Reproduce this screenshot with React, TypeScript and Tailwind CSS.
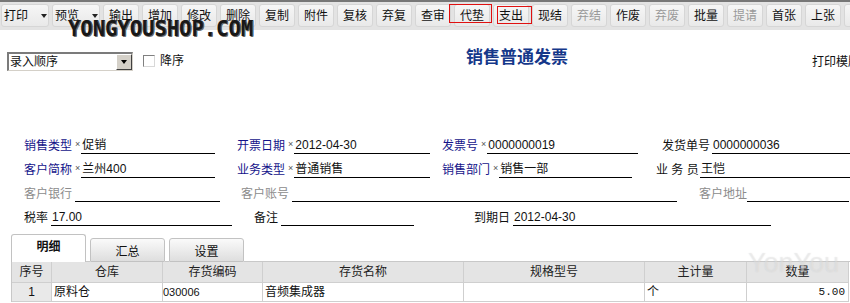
const tools = [
  { t: "打印", dd: true },
  { t: "预览", dd: true },
  { t: "输出" },
  { t: "增加" },
  { t: "修改" },
  { t: "删除" },
  { t: "复制" },
  { t: "附件" },
  { t: "复核" },
  { t: "弃复" },
  { t: "查审" },
  { t: "代垫", mark: "a" },
  { t: "支出", mark: "b" },
  { t: "现结" },
  { t: "弃结", off: true },
  { t: "作废" },
  { t: "弃废", off: true },
  { t: "批量" },
  { t: "提请", off: true },
  { t: "首张" },
  { t: "上张" },
  { t: "下张" },
];

const blue = "text-[#14148a]";
const gray = "text-[#8c8c8c]";

function Field({
  w,
  label,
  color,
  star,
  value,
  line,
}: {
  w: string;
  label: string;
  color: string;
  star?: boolean;
  value?: string;
  line: string;
}) {
  return (
    <div className={`flex items-center shrink-0 ${w}`}>
      <span className={`whitespace-nowrap ${color}`}>{label}</span>
      {star ? <span className="text-[9px] text-[#555] self-start mt-[3px] ml-[3px] mr-[1px] leading-none">×</span> : <span className="w-[3px]" />}
      <div className={`h-[16px] border-b border-black pl-[1px] leading-[15px] whitespace-nowrap shrink-0 ${line}`}>{value}</div>
    </div>
  );
}

const cols = ["序号", "仓库", "存货编码", "存货名称", "规格型号", "主计量", "数量"];

export default function App() {
  return (
    <div className="w-[850px] h-[303px] overflow-hidden bg-white relative text-[12px] text-[#111] font-['Liberation_Sans','Noto_Sans_CJK_SC',sans-serif]">
      {/* toolbar */}
      <div className="h-[30px] bg-[#e3e3e3] border-t-2 border-[#777] flex gap-[3px] pl-[1px] pt-[2px] overflow-hidden">
        {tools.map((b, i) => (
          <div
            key={i}
            className={`relative shrink-0 h-[23px] rounded-[3px] border border-[#d6d6d6] bg-gradient-to-b from-[#f6f6f6] to-[#e9e9e9] flex items-center ${b.dd ? "w-[48px] pl-[2px]" : "w-[36px] justify-center"} ${b.off ? "text-[#999]" : "text-[#111]"}`}
          >
            <span className="leading-none">{b.t}</span>
            {b.dd && <span className="ml-[13px] w-0 h-0 border-x-[3px] border-x-transparent border-t-[4px] border-t-[#222]" />}
            {b.mark === "a" && <span className="absolute -left-[6px] -top-[1px] w-[43px] h-[19px] border border-[#e01010]" />}
            {b.mark === "b" && <span className="absolute left-[3px] top-[1px] w-[35px] h-[18px] border border-[#e01010]" />}
          </div>
        ))}
      </div>
      <div className="absolute left-[68px] top-[19px] text-[20.5px] font-bold leading-none text-[#181818] font-['DejaVu_Sans_Mono',monospace] [text-shadow:1px_1px_0_#6a6a6a,1px_0_0_#333]">
        YONGYOUSHOP.COM
      </div>

      {/* order + title */}
      <div className="flex mt-[21px] h-[20px]">
        <div className="w-[466px] shrink-0 flex items-center pl-[7px]">
          <div className="w-[126px] h-[19px] flex border-t-2 border-l-2 border-[#7b7b7b] border-b border-r border-b-[#d4d0c8] border-r-[#d4d0c8] bg-white">
            <span className="flex-1 pl-[1px] leading-[16px]">录入顺序</span>
            <span className="w-[16px] h-[16px] bg-[#d4d0c8] border border-t-white border-l-white border-r-[#404040] border-b-[#404040] flex items-center justify-center">
              <span className="w-0 h-0 border-x-[3px] border-x-transparent border-t-[4px] border-t-black" />
            </span>
          </div>
          <span className="ml-[10px] w-[12px] h-[12px] border border-t-[#808080] border-l-[#808080] border-r-[#d8d8d8] border-b-[#d8d8d8] bg-white" />
          <span className="ml-[5px]">降序</span>
        </div>
        <div className="w-[346px] shrink-0 -mt-[3px] text-[17px] font-bold text-[#15388a] leading-[20px]">销售普通发票</div>
        <div className="whitespace-nowrap shrink-0 mt-[2px]">打印模版</div>
      </div>

      {/* header fields */}
      <div className="mt-[63px] pl-[24px]">
        <div className="flex items-center h-[24px]">
          <Field w="w-[213px]" label="销售类型" color={blue} star value="促销" line="w-[134px]" />
          <Field w="w-[205px]" label="开票日期" color={blue} star value="2012-04-30" line="w-[136px]" />
          <Field w="w-[220px]" label="发票号" color={blue} star value="0000000019" line="w-[151px]" />
          <Field w="w-[190px]" label="发货单号" color="text-[#111]" value="0000000036" line="w-[140px]" />
        </div>
        <div className="flex items-center h-[24px]">
          <Field w="w-[213px]" label="客户简称" color={blue} star value="兰州400" line="w-[134px]" />
          <Field w="w-[205px]" label="业务类型" color={blue} star value="普通销售" line="w-[136px]" />
          <Field w="w-[214px]" label="销售部门" color={blue} star value="销售一部" line="w-[133px]" />
          <Field w="w-[196px]" label="业 务 员" color="text-[#111]" value="王恺" line="w-[152px]" />
        </div>
        <div className="flex items-center h-[24px]">
          <Field w="w-[217px]" label="客户银行" color={gray} line="w-[145px]" />
          <Field w="w-[458px]" label="客户账号" color={gray} line="w-[385px]" />
          <Field w="w-[150px]" label="客户地址" color={gray} line="w-[102px]" />
        </div>
        <div className="flex items-center h-[24px]">
          <Field w="w-[230px]" label="税率" color="text-[#111]" value="17.00" line="w-[181px]" />
          <Field w="w-[220px]" label="备注" color="text-[#111]" line="w-[133px]" />
          <Field w="w-[300px]" label="到期日" color="text-[#111]" value="2012-04-30" line="w-[258px]" />
        </div>
      </div>

      {/* tabs */}
      <div className="mt-[4px] pl-[11px] flex items-end h-[28px]">
        <div className="w-[75px] h-[28px] bg-white border border-b-0 border-[#c2c2c2] rounded-t-[3px] font-bold text-center pt-[3px]">明细</div>
        <div className="w-[4px] h-px bg-[#c8c8c8]" />
        <div className="w-[75px] h-[24px] bg-gradient-to-b from-[#fafafa] to-[#dedede] border border-[#c2c2c2] rounded-t-[3px] text-center pt-[4px]">汇总</div>
        <div className="w-[4px] h-px bg-[#c8c8c8]" />
        <div className="w-[75px] h-[24px] bg-gradient-to-b from-[#fafafa] to-[#dedede] border border-[#c2c2c2] rounded-t-[3px] text-center pt-[4px]">设置</div>
        <div className="flex-1 h-px bg-[#c8c8c8]" />
      </div>

      {/* grid */}
      <div className="ml-[11px] w-[838px] border-l border-[#c8c8c8]">
        <div className="grid grid-cols-[40px_111px_100px_201px_181px_102px_102px] h-[21px] bg-[#e4e4e4] border-b border-[#cfcfcf]">
          {cols.map((c) => (
            <div key={c} className="border-r border-[#cfcfcf] flex items-center justify-center text-[#222]">
              {c}
            </div>
          ))}
        </div>
        <div className="grid grid-cols-[40px_111px_100px_201px_181px_102px_102px] h-[19px] border-b border-[#cfcfcf]">
          <div className="bg-[#e9e9e9] border-r border-[#cfcfcf] flex items-center justify-center">1</div>
          <div className="border-r border-[#cfcfcf] flex items-center pl-[2px]">原料仓</div>
          <div className="border-r border-[#cfcfcf] flex items-center text-[11px]">030006</div>
          <div className="border-r border-[#cfcfcf] flex items-center pl-[2px]">音频集成器</div>
          <div className="border-r border-[#cfcfcf]" />
          <div className="border-r border-[#cfcfcf] flex items-center pl-[2px]">个</div>
          <div className="border-r border-[#cfcfcf] flex items-center justify-end pr-[3px] text-[11px] font-['Liberation_Mono',monospace]">5.00</div>
        </div>
      </div>

      <div className="absolute left-[748px] top-[250px] text-[27px] leading-none text-white/30 [text-shadow:0_0_1px_rgba(170,170,170,0.35)] font-['Liberation_Sans',sans-serif]">
        YonYou
      </div>
    </div>
  );
}
